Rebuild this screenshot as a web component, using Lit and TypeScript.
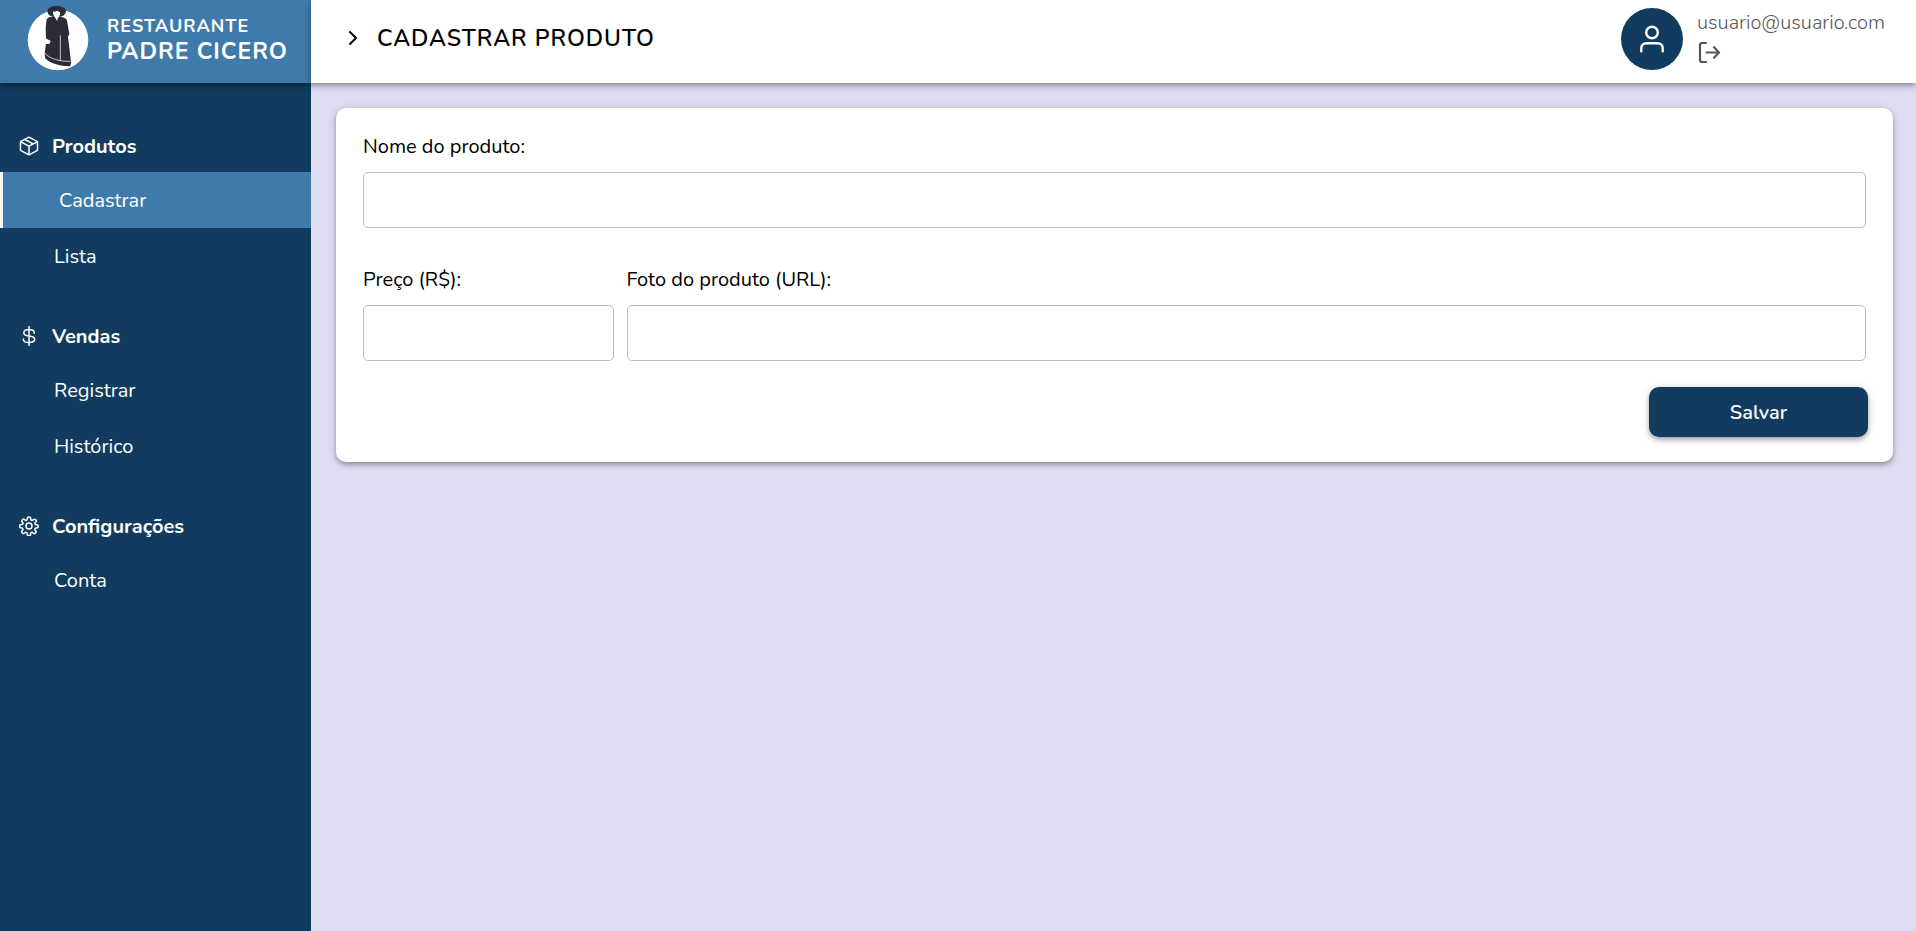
import { LitElement, html, css, svg } from "lit";
import { customElement } from "lit/decorators.js";
import { classMap } from "lit/directives/class-map.js";

const elevation = css`
  0 2px 4px -1px rgba(0, 0, 0, 0.2), 0 4px 5px 0 rgba(0, 0, 0, 0.14), 0 1px 10px 0 rgba(0, 0, 0, 0.16)
`;

const boxIcon = svg`
  <path d="M10 1.2 18 5.4a1 1 0 0 1 .5.9v7.4a1 1 0 0 1-.5.9L10 18.8 2 14.6a1 1 0 0 1-.5-.9V6.3a1 1 0 0 1 .5-.9Z" />
  <path d="M1.8 5.8 10 10.2l8.2-4.4M10 10.2v8.4M5.8 3.5l8.3 4.4" />`;

const dollarIcon = svg`
  <path d="M10 .6v18.8M15.3 7.2C15.3 4.8 13.6 3.6 10 3.6S4.8 4.8 4.8 6.7 6.4 9.6 10 10s5.700 1.200 5.700 3.300-1.900 3.200-5.700 3.200-5.700-1.300-5.700-3.600" />`;

const gearIcon = svg`
  <circle cx="10" cy="10" r="3" />
  <path d="M8.300 2.600a1.700 1.700 0 0 1 3.400 0v.5a1.300 1.300 0 0 0 2.200.9l.4-.3a1.700 1.700 0 0 1 2.400 2.400l-.4.400a1.300 1.300 0 0 0 .9 2.200h.4a1.700 1.700 0 0 1 0 3.400h-.5a1.300 1.300 0 0 0-.9 2.200l.4.400a1.700 1.700 0 0 1-2.400 2.400l-.4-.4a1.300 1.300 0 0 0-2.200.9v.4a1.700 1.700 0 0 1-3.400 0v-.5a1.300 1.300 0 0 0-2.200-.9l-.4.4a1.700 1.700 0 0 1-2.400-2.400l.4-.4a1.300 1.300 0 0 0-.9-2.200h-.4a1.700 1.700 0 0 1 0-3.400h.5a1.300 1.300 0 0 0 .9-2.200l-.4-.4a1.700 1.700 0 0 1 2.400-2.400l.4.4a1.300 1.300 0 0 0 2.200-.9Z" />`;

const sections = [
  { title: "Produtos", icon: boxIcon, items: ["Cadastrar", "Lista"] },
  { title: "Vendas", icon: dollarIcon, items: ["Registrar", "Histórico"] },
  { title: "Configurações", icon: gearIcon, items: ["Conta"] },
];

@customElement("app-sidebar")
export class AppSidebar extends LitElement {
  static styles = css`
    :host {
      display: block;
      background: #113c5f;
      color: #fff;
    }
    .brand {
      display: flex;
      align-items: center;
      gap: 17px;
      box-sizing: border-box;
      height: 83px;
      padding: 0 24px 3px 26px;
      background: #3f7aaa;
      box-shadow: ${elevation};
    }
    .logo {
      flex: none;
      width: 64px;
      height: 80px;
    }
    .name {
      display: flex;
      flex-direction: column;
      font-weight: 700;
      letter-spacing: 1px;
      white-space: nowrap;
    }
    .small {
      font-size: 18px;
      line-height: 24px;
    }
    .large {
      font-size: 23px;
      line-height: 28px;
    }
    .menu {
      display: flex;
      flex-direction: column;
      gap: 26px;
      padding-top: 37px;
    }
    .heading {
      display: flex;
      align-items: center;
      gap: 13px;
      height: 52px;
      margin: 0;
      padding-left: 19px;
      font-size: 20px;
      font-weight: 700;
    }
    .icon {
      width: 20px;
      height: 20px;
      fill: none;
      stroke: currentColor;
      stroke-width: 1.5;
      stroke-linecap: round;
      stroke-linejoin: round;
    }
    .list {
      margin: 0;
      padding: 0;
      list-style: none;
    }
    .link {
      display: block;
      padding: 2px 0 0 54px;
      font-size: 20px;
      line-height: 54px;
      color: inherit;
      text-decoration: none;
    }
    .active {
      border-left: 3px solid #fff;
      padding-left: 56px;
      background: #3f7aaa;
    }
  `;

  render() {
    return html`
      <div class="brand">
        <svg class="logo" viewBox="18 0 192 240" aria-hidden="true">
          <circle cx="114" cy="120" r="91" fill="#fff" />
          <g fill="#2b2c35">
            <path d="M82 35C83 23 95 18 110 18S137 23 138 35C136 43 129 49 120 50L98 50C90 48 83 43 82 35Z" />
            <path d="M98 50C90 50 83 52 80 58L77 84 78 118 91 126 88 132 78 132 74 160 75 174C90 190 118 198 151 199L153 186 144 110 148 102 141 62C139 54 130 51 120 50Z" />
          </g>
          <path fill="#fff" d="M99 34C105 38 107 32 112 33S117 37 120 35C121 44 118 50 114 54L111 63 106 53C101 48 98 42 99 34Z" />
          <path fill="#fff" d="m77 115 15 8-3 7-12-3Z" />
          <path fill="none" stroke="#fff" stroke-width="2.200" d="M121 106v74M75 160C92 178 118 184 151 184" />
        </svg>
        <div class="name">
          <span class="small">RESTAURANTE</span>
          <span class="large">PADRE CICERO</span>
        </div>
      </div>
      <nav class="menu">
        ${sections.map(
          (section) => html`
            <section>
              <h2 class="heading">
                <svg class="icon" viewBox="0 0 20 20" aria-hidden="true">${section.icon}</svg>
                ${section.title}
              </h2>
              <ul class="list">
                ${section.items.map(
                  (item) => html`<li>
                    <a href="#" class=${classMap({ link: true, active: item === "Cadastrar" })}>${item}</a>
                  </li>`
                )}
              </ul>
            </section>
          `
        )}
      </nav>
    `;
  }
}

@customElement("app-topbar")
export class AppTopbar extends LitElement {
  static styles = css`
    :host {
      display: flex;
      justify-content: space-between;
      box-sizing: border-box;
      height: 83px;
      padding: 0 29px 0 36px;
      background: #fff;
      box-shadow: ${elevation};
    }
    .title {
      display: flex;
      align-items: center;
      gap: 18px;
      height: 76px;
      margin: 0;
      font-size: 23px;
      font-weight: 600;
      letter-spacing: 1px;
      color: #000;
    }
    .chevron {
      width: 12px;
      height: 16px;
    }
    .user {
      display: flex;
      gap: 14px;
      padding-top: 8px;
    }
    .avatar {
      width: 62px;
      height: 62px;
    }
    .info {
      display: flex;
      flex-direction: column;
      align-items: flex-start;
      gap: 2px;
      min-width: 190px;
      color: #585555;
    }
    .email {
      font-size: 20px;
      line-height: 30px;
      font-weight: 300;
    }
    .logout {
      display: flex;
      padding: 0;
      border: 0;
      background: none;
      color: inherit;
      cursor: pointer;
    }
    .exit {
      width: 24px;
      height: 24px;
    }
    .chevron,
    .exit {
      fill: none;
      stroke: currentColor;
      stroke-width: 2;
      stroke-linecap: round;
      stroke-linejoin: round;
    }
  `;

  render() {
    return html`
      <h1 class="title">
        <svg class="chevron" viewBox="0 0 12 16" aria-hidden="true"><path d="m3 2 6 6-6 6" /></svg>
        CADASTRAR PRODUTO
      </h1>
      <div class="user">
        <svg class="avatar" viewBox="0 0 62 62" aria-hidden="true">
          <circle cx="31" cy="31" r="31" fill="#113c5f" />
          <g fill="none" stroke="#fff" stroke-width="2.400" stroke-linecap="round">
            <circle cx="31" cy="24.500" r="5.800" />
            <path d="M20.300 43.200v-3a5 5 0 0 1 5-5h11.400a5 5 0 0 1 5 5v3" />
          </g>
        </svg>
        <div class="info">
          <span class="email">usuario@usuario.com</span>
          <button class="logout" type="button" aria-label="Sair">
            <svg class="exit" viewBox="0 0 24 24" aria-hidden="true">
              <path stroke-width="2.200" d="M9 3H5a2 2 0 0 0-2 2v15a2 2 0 0 0 2 2h4M9.500 12.500h12.300M17 7.200l5 5.300-5 5.300" />
            </svg>
          </button>
        </div>
      </div>
    `;
  }
}

@customElement("product-form")
export class ProductForm extends LitElement {
  static styles = css`
    :host {
      display: block;
    }
    .card {
      display: flex;
      flex-direction: column;
      padding: 25px;
      border-radius: 10px;
      background: #fff;
      box-shadow: ${elevation};
    }
    .fields {
      display: grid;
      grid-template-columns: calc(100% / 6) minmax(0, 1fr);
      gap: 38px 13px;
      margin: 0 2px;
    }
    .field {
      display: flex;
      flex-direction: column;
      gap: 11px;
    }
    .wide {
      grid-column: 1 / -1;
    }
    .label {
      font-size: 20px;
      line-height: 28px;
      color: #000;
    }
    .input {
      box-sizing: border-box;
      width: 100%;
      height: 56px;
      padding: 0 12px;
      border: 1px solid #bebec2;
      border-radius: 5px;
      background: #fff;
      font: inherit;
      font-size: 20px;
    }
    .save {
      align-self: flex-end;
      width: 219px;
      height: 50px;
      margin-top: 26px;
      border: 0;
      border-radius: 10px;
      background: #113c5f;
      box-shadow: ${elevation};
      color: #fff;
      font: inherit;
      font-size: 20px;
      font-weight: 600;
      cursor: pointer;
    }
  `;

  render() {
    return html`
      <form class="card" @submit=${(e: Event) => e.preventDefault()}>
        <div class="fields">
          <div class="field wide">
            <label class="label" for="name">Nome do produto:</label>
            <input class="input" id="name" type="text" />
          </div>
          <div class="field">
            <label class="label" for="price">Preço (R$):</label>
            <input class="input" id="price" type="text" inputmode="decimal" />
          </div>
          <div class="field">
            <label class="label" for="photo">Foto do produto (URL):</label>
            <input class="input" id="photo" type="url" />
          </div>
        </div>
        <button class="save" type="submit">Salvar</button>
      </form>
    `;
  }
}

@customElement("app-root")
export class AppRoot extends LitElement {
  static styles = css`
    :host {
      display: grid;
      grid-template-columns: 311px minmax(0, 1fr);
      min-height: 100vh;
      background: #dfddf1;
      font-family: Nunito, Lato, "Open Sans", sans-serif;
    }
    .content {
      padding: 25px 23px 25px 25px;
    }
  `;

  render() {
    return html`
      <app-sidebar></app-sidebar>
      <div>
        <app-topbar></app-topbar>
        <main class="content"><product-form></product-form></main>
      </div>
    `;
  }
}
